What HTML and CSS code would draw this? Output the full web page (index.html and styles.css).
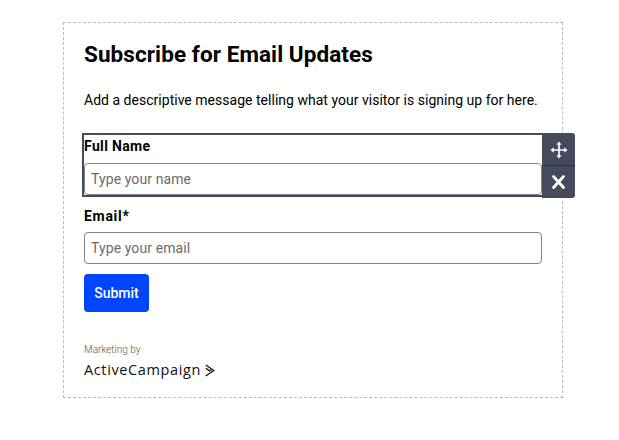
FILE: index.html
```html
<!DOCTYPE html>
<html lang="en">
<head>
<meta charset="utf-8">
<title>Subscribe for Email Updates</title>
<link rel="stylesheet" href="styles.css">
</head>
<body>
<form class="form">
  <h1 class="title">Subscribe for Email Updates</h1>
  <p class="message">Add a descriptive message telling what your visitor is signing up for here.</p>
  <div class="field selected">
    <label class="label name-label" for="name">Full Name</label>
    <input class="input" id="name" type="text" placeholder="Type your name">
    <div class="tools">
      <button class="tool" type="button" aria-label="Move">
        <svg width="18" height="18" viewBox="0 0 18 18"><path d="M9 2v14M2 9h14" fill="none" stroke="#fff" stroke-width="1.7"/><path d="M9 .5l2.700 3.200H6.300zM9 17.500l2.700-3.200H6.300zM.5 9l3.200-2.700v5.400zM17.500 9l-3.200-2.700v5.400z" fill="#fff"/></svg>
      </button>
      <button class="tool" type="button" aria-label="Remove">
        <svg width="18" height="18" viewBox="0 0 18 18"><path d="M3.500 3.500l10 11M13.500 3.500l-10 11" fill="none" stroke="#fff" stroke-width="2.800" stroke-linecap="round"/></svg>
      </button>
    </div>
  </div>
  <div class="field">
    <label class="label email-label" for="email">Email*</label>
    <input class="input" id="email" type="text" placeholder="Type your email">
  </div>
  <button class="submit" type="button">Submit</button>
  <div class="marketing">Marketing by</div>
  <div class="brand">
    <span class="brand-name">ActiveCampaign</span>
    <svg width="10" height="13" viewBox="0 0 10 13"><path d="M.8 1L8.800 6.500L.8 12M.8 4.300L4.600 6.900L6.200 5.800" fill="none" stroke="#111" stroke-width="1.300"/></svg>
  </div>
</form>
</body>
</html>
```
FILE: styles.css
```css
* { box-sizing: border-box; }
body { margin: 0; background: #fff; color: #000; font-family: Roboto, "Liberation Sans", sans-serif; }
.form { width: 500px; height: 376px; margin: 22px 0 0 63px; padding: 14px 20px; border: 1px dashed #bcbcbc; }
.title { margin: 0; font-size: 22.5px; line-height: 34px; font-weight: 700; letter-spacing: .08px; white-space: nowrap; }
.message { margin: 19px 0 25px; font-size: 14px; line-height: 20px; letter-spacing: .02px; white-space: nowrap; }
.field { position: relative; height: 60px; }
.field + .field { margin-top: 9px; }
.selected { outline: 2px solid #464a5e; }
.label { display: block; height: 28px; font-size: 14px; line-height: 23px; font-weight: 700; }
.name-label { letter-spacing: .35px; }
.email-label { line-height: 25px; letter-spacing: .7px; }
.input { display: block; width: 458px; height: 32px; padding: 0 6px; border: 1px solid #858585; border-radius: 4px; background: #fff; font: 14px/20px Roboto, sans-serif; letter-spacing: .1px; }
.input::placeholder { color: #6c6c6c; opacity: 1; }
.tools { position: absolute; top: -2px; left: 458px; width: 33px; height: 65px; background: #464a5e; border-radius: 0 3px 3px 0; }
.tool { display: flex; align-items: center; justify-content: center; width: 33px; height: 32px; padding: 0; border: 0; background: none; }
.tool:first-child { height: 33px; padding-top: 1px; border-bottom: 1px solid #2d3144; }
.submit { display: block; width: 65px; height: 38px; margin-top: 10px; padding: 0; border: 0; border-radius: 4px; background: #0045ff; color: #fff; font: 500 14px Roboto, sans-serif; }
.marketing { margin-top: 31px; font-size: 10px; line-height: 14px; font-weight: 300; color: #555; }
.brand { display: flex; align-items: center; gap: 4px; height: 26px; }
.brand-name { font: 14.5px/20px "Open Sans", sans-serif; letter-spacing: .62px; color: #111; }
```
